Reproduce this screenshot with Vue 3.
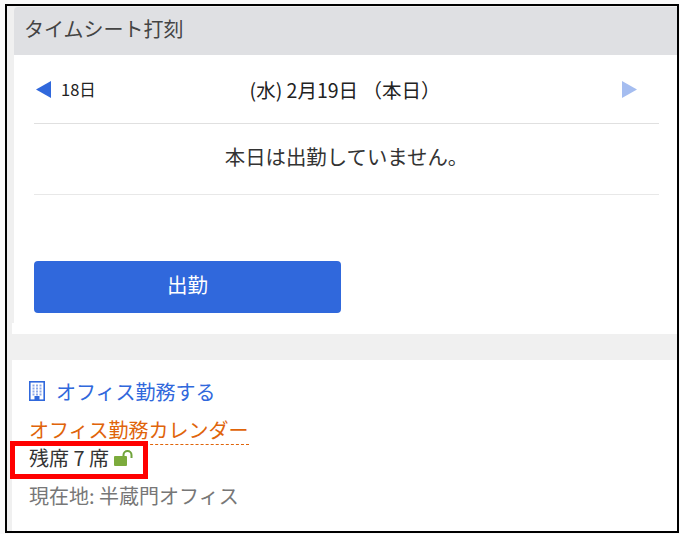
<template>
  <div class="frame">
    <section class="card">
      <h2 class="card-title">タイムシート打刻</h2>
      <div class="card-body">
        <div class="date-row">
          <span class="prev">
            <svg class="arrow" width="15" height="17" viewBox="0 0 15 17"><path d="M15 0V17L0 8.5Z" fill="#3068dc" /></svg>
            <span class="prev-label">18日</span>
          </span>
          <span class="today">(水) 2月19日 （本日）</span>
          <svg class="arrow next" width="15" height="17" viewBox="0 0 15 17"><path d="M0 0V17L15 8.5Z" fill="#a5bdf0" /></svg>
        </div>
        <p class="status">本日は出勤していません。</p>
        <button class="punch">出勤</button>
      </div>
      <div class="card-foot"></div>
    </section>
    <div class="spacer"></div>
    <section class="office">
      <a class="office-link">
        <svg width="16" height="20" viewBox="0 0 16 20" class="building">
          <rect x="0.8" y="0.8" width="14.4" height="18.4" fill="none" stroke="#3068dc" stroke-width="1.6" />
          <g fill="#8fa9e8">
            <rect v-for="c in cells" :key="c.k" :x="c.x" :y="c.y" width="2" height="2" />
          </g>
          <rect x="5.5" y="15" width="5" height="4" fill="#3068dc" />
        </svg>
        <span>オフィス勤務する</span>
      </a>
      <div class="cal"><a class="cal-link">オフィス勤務カレンダー</a></div>
      <div class="seats">
        <span class="seat-text">残席 7 席</span>
        <svg class="lock" width="20" height="17" viewBox="0 0 20 17">
          <path d="M9.5 7V5a4 4 0 0 1 8 0v3" fill="none" stroke="#6fa33a" stroke-width="2" />
          <rect x="0" y="6" width="13" height="10" rx="1" fill="#7cab3c" />
        </svg>
        <span class="mark"></span>
      </div>
      <div class="place">現在地: 半蔵門オフィス</div>
    </section>
  </div>
</template>

<script setup>
const cells = []
for (let r = 0; r < 4; r++) {
  for (let col = 0; col < 3; col++) {
    cells.push({ k: `${r}-${col}`, x: 3.5 + col * 3.5, y: 3.5 + r * 3 })
  }
}
</script>

<style>
html, body { margin: 0; background: #fafafa; }
</style>

<style scoped>
.frame {
  box-sizing: border-box;
  width: 674px;
  height: 529px;
  margin: 4px 0 0 5px;
  border: 2px solid #000;
  background: #f0f0f0;
  font-family: "Noto Sans CJK JP", "Noto Sans", sans-serif;
  color: #333;
  overflow: hidden;
}
.card {
  margin: 1px 0 0 5px;
}
.card-title {
  margin: 0 0 0 2px;
  height: 48px;
  padding-left: 10px;
  background: #dfe0e3;
  border-top-left-radius: 4px;
  font-size: 20px;
  font-weight: 400;
  line-height: 44px;
  color: #444;
}
.card-body {
  margin-left: 2px;
  background: #fff;
  padding: 0 18px 10px 20px;
}
.card-foot {
  height: 11px;
  background: #fff;
}
.date-row {
  display: flex;
  align-items: center;
  justify-content: space-between;
  height: 69px;
  padding: 0 22px 0 2px;
  border-bottom: 1px solid #e0e0e0;
  box-sizing: border-box;
  color: #222;
}
.prev {
  display: flex;
  align-items: center;
  gap: 10px;
  width: 200px;
  font-size: 16.5px;
}
.today {
  font-size: 19.5px;
  flex: 1;
  text-align: center;
  padding-right: 168px;
}
.arrow { display: block; flex: none; }
.status {
  margin: 0;
  height: 71px;
  line-height: 64px;
  text-align: center;
  font-size: 20.4px;
  color: #333;
  border-bottom: 1px solid #e8e8e8;
  box-sizing: border-box;
}
.punch {
  display: block;
  width: 307px;
  height: 52px;
  margin-top: 66px;
  padding: 0 0 6px;
  border: 0;
  border-radius: 4px;
  background: #3068dc;
  color: #fff;
  font: inherit;
  font-size: 20.5px;
}
.spacer { height: 26px; }
.office {
  margin-left: 5px;
  background: #fff;
  height: 200px;
  padding: 16px 0 0 17px;
  box-sizing: border-box;
}
.office-link {
  display: flex;
  align-items: center;
  gap: 11px;
  height: 30px;
  color: #3068dc;
  font-size: 20px;
}
.building { display: block; flex: none; }
.cal {
  margin-top: 10px;
  height: 30px;
}
.cal-link {
  display: inline-block;
  height: 28px;
  line-height: 28px;
  color: #e0640a;
  font-size: 20px;
  border-bottom: 1px dashed #e0640a;
}
.seats {
  position: relative;
  display: flex;
  align-items: center;
  gap: 5px;
  height: 24px;
  font-size: 20px;
  line-height: 24px;
  color: #333;
}
.lock { display: block; }
.mark {
  position: absolute;
  left: -19px;
  top: -5px;
  width: 138px;
  height: 38px;
  box-sizing: border-box;
  border: 5px solid #f00;
}
.place {
  margin-top: 11px;
  height: 30px;
  line-height: 30px;
  color: #777;
  font-size: 20px;
}
</style>
